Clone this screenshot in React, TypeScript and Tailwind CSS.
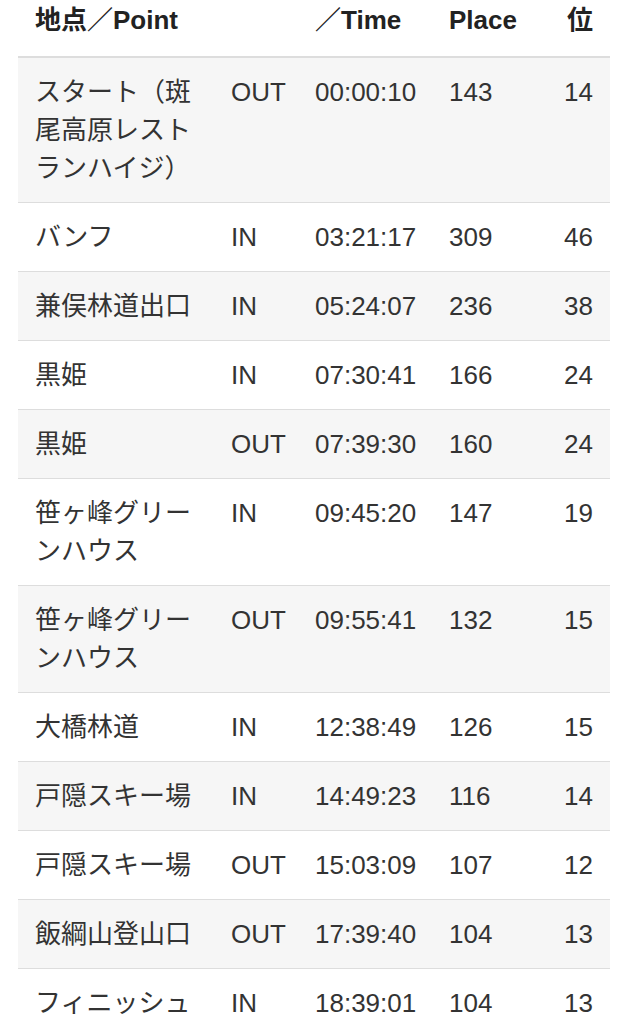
const rows = [
  { point: "スタート（斑尾高原レストランハイジ）", io: "OUT", time: "00:00:10", place: "143", rank: "14" },
  { point: "バンフ", io: "IN", time: "03:21:17", place: "309", rank: "46" },
  { point: "兼俣林道出口", io: "IN", time: "05:24:07", place: "236", rank: "38" },
  { point: "黒姫", io: "IN", time: "07:30:41", place: "166", rank: "24" },
  { point: "黒姫", io: "OUT", time: "07:39:30", place: "160", rank: "24" },
  { point: "笹ヶ峰グリーンハウス", io: "IN", time: "09:45:20", place: "147", rank: "19" },
  { point: "笹ヶ峰グリーンハウス", io: "OUT", time: "09:55:41", place: "132", rank: "15" },
  { point: "大橋林道", io: "IN", time: "12:38:49", place: "126", rank: "15" },
  { point: "戸隠スキー場", io: "IN", time: "14:49:23", place: "116", rank: "14" },
  { point: "戸隠スキー場", io: "OUT", time: "15:03:09", place: "107", rank: "12" },
  { point: "飯綱山登山口", io: "OUT", time: "17:39:40", place: "104", rank: "13" },
  { point: "フィニッシュ", io: "IN", time: "18:39:01", place: "104", rank: "13" },
]

export default function App() {
  return (
    <div
      className="w-[618px] h-[1024px] overflow-hidden bg-white pl-[18px] pr-[8px] text-[26px] leading-[38px] text-[#333]"
      style={{ fontFamily: '"Liberation Sans", "Noto Sans CJK JP", sans-serif' }}
    >
      <table className="w-[592px] table-fixed border-collapse">
        <colgroup>
          <col className="w-[196px]" />
          <col className="w-[84px]" />
          <col className="w-[134px]" />
          <col className="w-[119px]" />
          <col className="w-[59px]" />
        </colgroup>
        <thead>
          <tr className="border-b-2 border-[#dddddd] text-left font-bold text-[#222]">
            <th className="pl-[17px] pt-[1px] pb-[17px] whitespace-nowrap">地点／Point</th>
            <th className="pl-[17px] pt-[1px] pb-[17px]"></th>
            <th className="pl-[17px] pt-[1px] pb-[17px] whitespace-nowrap">／Time</th>
            <th className="pl-[17px] pt-[1px] pb-[17px]">Place</th>
            <th className="pr-[17px] pt-[1px] pb-[17px] text-right">位</th>
          </tr>
        </thead>
        <tbody>
          {rows.map((r, i) => (
            <tr key={i} className={`border-t border-[#dddddd] align-top ${i % 2 === 0 ? "bg-[#f6f6f6]" : "bg-white"}`}>
              <td className="pl-[17px] pr-[17px] py-[15px] break-all">{r.point}</td>
              <td className="pl-[17px] py-[15px]">{r.io}</td>
              <td className="pl-[17px] py-[15px]">{r.time}</td>
              <td className="pl-[17px] py-[15px]">{r.place}</td>
              <td className="pr-[17px] py-[15px] text-right">{r.rank}</td>
            </tr>
          ))}
        </tbody>
      </table>
    </div>
  )
}
